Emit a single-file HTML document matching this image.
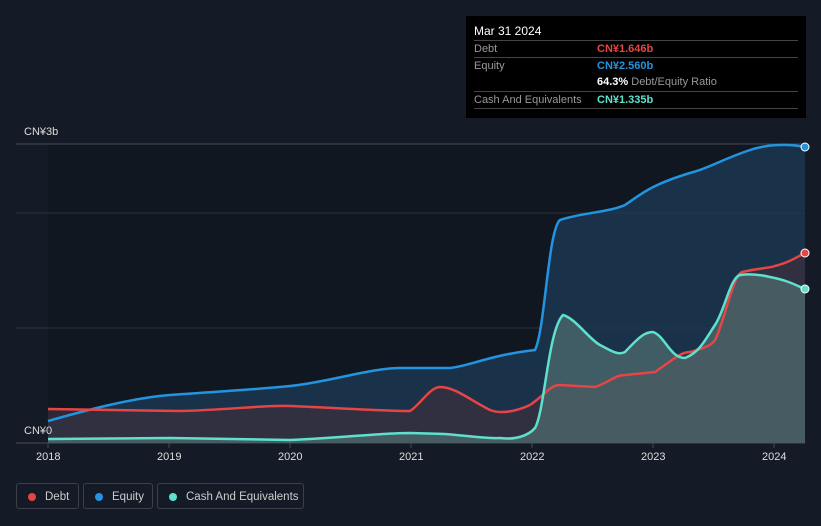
<!DOCTYPE html>
<html><head><style>
body{margin:0;width:821px;height:526px;background:#151b26;font-family:"Liberation Sans",sans-serif;overflow:hidden;position:relative}
.tip{position:absolute;left:466px;top:16px;width:340px;height:102px;background:#000}
.tip .t{position:absolute;left:8px;top:8px;color:#fff;font-size:12px}
.row{position:absolute;left:8px;width:324px;border-top:1px solid #444;height:16px;font-size:11px;color:#999;line-height:16px;white-space:nowrap}
.row span{position:absolute;left:123px;font-weight:bold}
.leg{position:absolute;top:483px;height:26px;border:1px solid #3a3f4a;border-radius:3px;color:#ccc;font-size:11.5px;line-height:26px;box-sizing:border-box;white-space:nowrap}
.leg i{position:absolute;left:11px;top:9px;width:8px;height:8px;border-radius:50%}
.yr{position:absolute;top:451px;color:#ddd;font-size:11px}
</style></head><body>
<svg width="821" height="526" style="position:absolute;left:0;top:0">
<rect x="48" y="144" width="757" height="299" fill="#111720"/>
<line x1="16" y1="144" x2="805" y2="144" stroke="#444a55"/>
<line x1="16" y1="213" x2="805" y2="213" stroke="#2a303a"/>
<line x1="16" y1="328" x2="805" y2="328" stroke="#2a303a"/>
<line x1="16" y1="443" x2="805" y2="443" stroke="#444a55"/>
<g stroke="#444a55"><line x1="48" y1="443" x2="48" y2="448"/><line x1="169" y1="443" x2="169" y2="448"/><line x1="290" y1="443" x2="290" y2="448"/><line x1="411" y1="443" x2="411" y2="448"/><line x1="532" y1="443" x2="532" y2="448"/><line x1="653" y1="443" x2="653" y2="448"/><line x1="774" y1="443" x2="774" y2="448"/></g>
<path d="M48,421 C80,412 130,398 170,395 S250,390 290,386 S370,368 400,368 L450,368 C470,366 490,355 535,350 C545,330 548,230 560,220 C580,213 610,212 625,205 C640,195 650,185 690,173 C710,168 720,160 750,150 C765,145 785,143 805,147 L805,443 L48,443Z" fill="#1b3a55" fill-opacity="0.8"/>
<path d="M48,409 L180,411 C230,410 260,405 290,406 S380,411 410,411 C420,405 430,387 440,387 C455,387 470,400 490,410 C500,414 515,412 530,405 C545,395 550,385 560,385 L595,387 C610,382 615,375 625,375 L655,372 C670,362 680,352 690,352 C705,348 712,345 715,340 C725,320 733,275 742,272 C760,268 770,268 775,266 C790,262 795,258 805,253 L805,443 L48,443Z" fill="#3b2f3d" fill-opacity="0.7"/>
<path d="M48,439 L170,438 L290,440 C340,438 380,433 410,433 L445,434 C470,436 490,439 500,438 C515,440 528,436 535,428 C545,410 548,330 563,315 C575,318 590,340 600,345 C610,350 618,356 625,352 C640,336 645,332 653,332 C665,336 670,358 685,358 C700,352 705,340 715,325 C725,310 730,278 740,275 C755,273 770,277 770,277 C790,281 795,285 805,289 L805,443 L48,443Z" fill="#4d6b6e" fill-opacity="0.75"/>
<path d="M48,421 C80,412 130,398 170,395 S250,390 290,386 S370,368 400,368 L450,368 C470,366 490,355 535,350 C545,330 548,230 560,220 C580,213 610,212 625,205 C640,195 650,185 690,173 C710,168 720,160 750,150 C765,145 785,143 805,147" fill="none" stroke="#2394df" stroke-width="2.5"/>
<path d="M48,409 L180,411 C230,410 260,405 290,406 S380,411 410,411 C420,405 430,387 440,387 C455,387 470,400 490,410 C500,414 515,412 530,405 C545,395 550,385 560,385 L595,387 C610,382 615,375 625,375 L655,372 C670,362 680,352 690,352 C705,348 712,345 715,340 C725,320 733,275 742,272 C760,268 770,268 775,266 C790,262 795,258 805,253" fill="none" stroke="#e64545" stroke-width="2.5"/>
<path d="M48,439 L170,438 L290,440 C340,438 380,433 410,433 L445,434 C470,436 490,439 500,438 C515,440 528,436 535,428 C545,410 548,330 563,315 C575,318 590,340 600,345 C610,350 618,356 625,352 C640,336 645,332 653,332 C665,336 670,358 685,358 C700,352 705,340 715,325 C725,310 730,278 740,275 C755,273 770,277 770,277 C790,281 795,285 805,289" fill="none" stroke="#5fe0cc" stroke-width="2.5"/>
<circle cx="805" cy="147" r="4" fill="#2394df" stroke="#fff" stroke-width="1"/>
<circle cx="805" cy="253" r="4" fill="#e64545" stroke="#fff" stroke-width="1"/>
<circle cx="805" cy="289" r="4" fill="#5fe0cc" stroke="#fff" stroke-width="1"/>
</svg>
<div style="position:absolute;left:24px;top:126px;color:#ddd;font-size:11px">CN¥3b</div>
<div style="position:absolute;left:24px;top:425px;color:#ddd;font-size:11px">CN¥0</div>
<div class="yr" style="left:36px">2018</div><div class="yr" style="left:157px">2019</div><div class="yr" style="left:278px">2020</div><div class="yr" style="left:399px">2021</div><div class="yr" style="left:520px">2022</div><div class="yr" style="left:641px">2023</div><div class="yr" style="left:762px">2024</div>
<div class="tip"><div class="t">Mar 31 2024</div>
<div class="row" style="top:24px">Debt<span style="color:#e64545">CN¥1.646b</span></div>
<div class="row" style="top:41px">Equity<span style="color:#2394df">CN¥2.560b</span></div>
<div class="row" style="top:58px;border-top:none"><span style="color:#fff">64.3% <b style="color:#999;font-weight:normal">Debt/Equity Ratio</b></span></div>
<div class="row" style="top:75px">Cash And Equivalents<span style="color:#5fe0cc">CN¥1.335b</span></div>
<div class="row" style="top:92px;height:0"></div>
</div>
<div class="leg" style="left:16px;width:63px"><i style="background:#e64545"></i><span style="position:absolute;left:28px">Debt</span></div>
<div class="leg" style="left:83px;width:70px"><i style="background:#2394df"></i><span style="position:absolute;left:28px">Equity</span></div>
<div class="leg" style="left:157px;width:147px"><i style="background:#5fe0cc"></i><span style="position:absolute;left:28px">Cash And Equivalents</span></div>
</body></html>
